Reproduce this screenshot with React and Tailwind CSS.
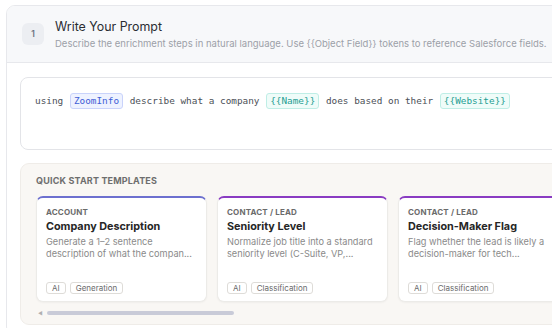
import React from 'react';

const templates = [
  {
    object: 'Account',
    title: 'Company Description',
    desc: 'Generate a 1–2 sentence description of what the compan...',
    tag: 'Generation',
    accent: 'border-t-[#6d70cf]',
  },
  {
    object: 'Contact / Lead',
    title: 'Seniority Level',
    desc: 'Normalize job title into a standard seniority level (C-Suite, VP,...',
    tag: 'Classification',
    accent: 'border-t-[#8a3cc2]',
  },
  {
    object: 'Contact / Lead',
    title: 'Decision-Maker Flag',
    desc: 'Flag whether the lead is likely a decision-maker for tech...',
    tag: 'Classification',
    accent: 'border-t-[#8a3cc2]',
  },
];

function Token({ children, kind }) {
  const cls =
    kind === 'source'
      ? 'bg-[#eef2ff] border-[#c9d3fb] text-[#3f5fd6]'
      : 'bg-[#effcf9] border-[#bfeee6] text-[#1f9e93]';
  return (
    <span className={`inline-block mx-[1px] px-[3px] leading-[14px] rounded-[3px] border ${cls}`}>
      {children}
    </span>
  );
}

function TemplateCard({ t }) {
  return (
    <div
      className={`w-[171px] h-[106px] shrink-0 bg-white rounded-[7px] border border-[#ecebe8] border-t-2 ${t.accent} shadow-[0_1px_2px_rgba(0,0,0,0.04)] px-[9px] pt-[8px] pb-[7px] flex flex-col`}
    >
      <div className="text-[8px] font-bold uppercase text-[#6b6b6b] tracking-[0.02em]">{t.object}</div>
      <div className="text-[10.8px] font-bold text-[#262626] mt-[2px] leading-[13px]">{t.title}</div>
      <div className="text-[9.2px] text-[#8a8a8a] leading-[12px] mt-[3px]">{t.desc}</div>
      <div className="mt-auto flex gap-[4px]">
        <span className="px-[5px] border border-[#dedcd8] rounded-[3px] text-[8px] leading-[10px] text-[#6b6b6b]">AI</span>
        <span className="px-[5px] border border-[#dedcd8] rounded-[3px] text-[8px] leading-[10px] text-[#6b6b6b]">{t.tag}</span>
      </div>
    </div>
  );
}

export default function App() {
  return (
    <div className="w-[552px] h-[328px] overflow-hidden bg-white font-['Inter',sans-serif]">
      <div className="ml-[6px] mt-[5px] w-[600px] border border-[#e7e8ec] rounded-[9px] overflow-hidden">
        <div className="bg-[#f7f8fa] border-b border-[#e7e8ec] h-[57px] flex items-center pl-[15px] gap-[11px]">
          <div className="w-[22px] h-[22px] rounded-[6px] bg-[#eceef2] flex items-center justify-center text-[8.5px] font-semibold text-[#6b7280]">1</div>
          <div>
            <div className="text-[12.4px] text-[#2a2d33] leading-[16px]">Write Your Prompt</div>
            <div className="text-[9.5px] text-[#9ca0a8] leading-[12px] mt-[3px] whitespace-nowrap">
              Describe the enrichment steps in natural language. Use {'{{Object Field}}'} tokens to reference Salesforce fields.
            </div>
          </div>
        </div>
        <div className="px-[13px] pt-[14px] pb-[10px]">
          <div className="h-[73px] border border-[#e3e4e8] rounded-[8px] px-[14px] pt-[15px] font-['DejaVu_Sans_Mono',monospace] text-[9.4px] text-[#4b4f57] whitespace-nowrap">
            using <Token kind="source">ZoomInfo</Token> describe what a company <Token>{'{{Name}}'}</Token> does based on their{' '}
            <Token>{'{{Website}}'}</Token>
          </div>
          <div className="mt-[13px] h-[162px] bg-[#f9f7f4] border border-[#efece8] rounded-[9px] px-[15px] pt-[10px]">
            <div className="text-[9px] font-bold text-[#6e6e6e] tracking-[0.02em]">QUICK START TEMPLATES</div>
            <div className="mt-[8px] flex gap-[10px]">
              {templates.map((t) => (
                <TemplateCard key={t.title} t={t} />
              ))}
            </div>
            <div className="mt-[8px] flex items-center gap-[4px] pl-[2px]">
              <span className="text-[5px] text-[#b0b0b0]">◀</span>
              <div className="w-[187px] h-[4px] rounded-full bg-[#c9cbd8]" />
            </div>
          </div>
        </div>
      </div>
    </div>
  );
}
